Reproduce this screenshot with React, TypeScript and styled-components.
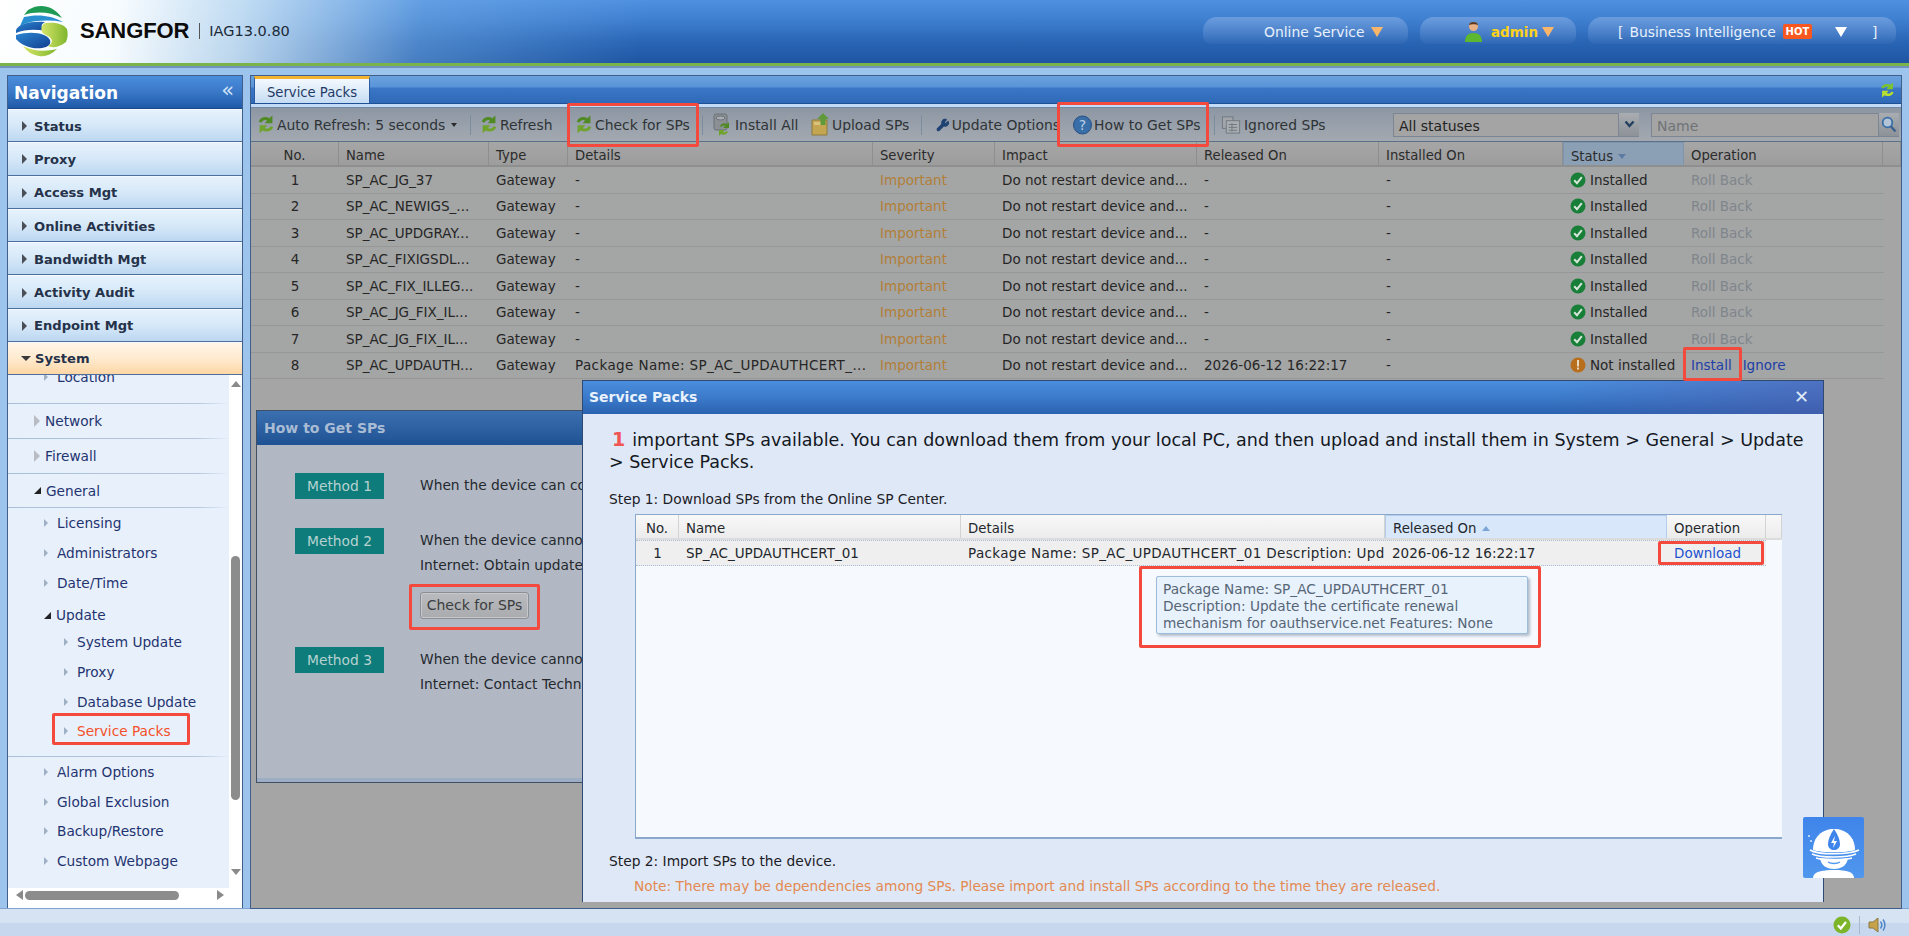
import React from "react";
import styled, { createGlobalStyle } from "styled-components";
import { Wrench } from "lucide-react";

const GlobalStyle = createGlobalStyle`
  html, body {
    margin: 0;
    padding: 0;
    background: #9cc4ec;
    font-family: "DejaVu Sans", Verdana, sans-serif;
    font-size: 13px;
  }
  * { box-sizing: border-box; }
`;

const Page = styled.div`
  position: relative;
  width: 1909px;
  height: 936px;
  display: flex;
  flex-direction: column;
  overflow: hidden;
  background: #9cc4ec;
`;

/* ---------- header ---------- */

const Header = styled.header`
  flex: none;
  height: 68px;
  display: flex;
  align-items: center;
  padding: 0 13px 5px 15px;
  border-bottom: 2px solid #6f93bd;
  box-shadow: inset 0 -3px 0 #79b34a;
  background:
    linear-gradient(100deg, #ffffff 0, #f6fbfe 120px, rgba(205, 228, 245, 0.9) 240px, rgba(120, 175, 230, 0.45) 420px, rgba(70, 135, 220, 0) 640px),
    linear-gradient(180deg, #4f90e0 0, #3f7fd0 30%, #2a66b6 62%, #1c539f 100%);
`;

const LogoText = styled.span`
  margin-left: 11px;
  font-family: "Liberation Sans", Arial, sans-serif;
  font-size: 22px;
  font-weight: 700;
  color: #0c0c0c;
  letter-spacing: -0.1px;
`;

const LogoDivider = styled.span`
  width: 1px;
  height: 16px;
  margin: 0 9px 0 10px;
  background: #555;
`;

const Version = styled.span`
  font-size: 14.5px;
  color: #1d2a38;
`;

const HeaderRight = styled.div`
  margin-left: auto;
  display: flex;
  align-items: center;
  gap: 12px;
`;

const Pill = styled.div<{ $w: number; $pad: number }>`
  width: ${(p) => p.$w}px;
  height: 27px;
  padding: 2px 0 0 ${(p) => p.$pad}px;
  display: flex;
  align-items: center;
  border-radius: 14px 14px 8px 8px;
  background: linear-gradient(180deg, rgba(120, 165, 225, 0.75), rgba(60, 110, 185, 0.35));
  color: #e8f1fb;
  font-size: 13.9px;
  white-space: nowrap;
`;

const AdminName = styled.span`
  color: #ffd21a;
  font-weight: 700;
  font-size: 13.5px;
  margin: 0 4px 0 9px;
`;

const Tri = styled.span<{ $c: string; $ml?: number }>`
  flex: none;
  width: 0;
  height: 0;
  margin-left: ${(p) => p.$ml ?? 0}px;
  border-left: 6px solid transparent;
  border-right: 6px solid transparent;
  border-top: 10px solid ${(p) => p.$c};
`;

const Bracket = styled.span<{ $ml?: number; $mr?: number }>`
  margin-left: ${(p) => p.$ml ?? 0}px;
  margin-right: ${(p) => p.$mr ?? 0}px;
`;

const Hot = styled.span`
  width: 29px;
  height: 15px;
  margin: 0 23px 0 7px;
  background: #f8581f;
  border-radius: 2px;
  color: #fff;
  font-size: 10px;
  font-weight: 700;
  line-height: 15px;
  text-align: center;
`;

/* ---------- body layout ---------- */

const Body = styled.div`
  flex: none;
  height: 834px;
  margin-top: 7px;
  padding: 0 7px;
  display: flex;
  gap: 7px;
`;

const StatusBar = styled.footer`
  flex: none;
  height: 28px;
  margin-top: -1px;
  border-top: 1px solid #7ea3cf;
  background: linear-gradient(180deg, #d6e3f3 0, #d6e3f3 50%, #c7d8ee 50%, #c7d8ee 100%);
  display: flex;
  align-items: center;
  justify-content: flex-end;
  gap: 8px;
  padding: 4px 21px 0 0;
`;

const StatusDivider = styled.span`
  width: 1px;
  height: 18px;
  background: #aab9ca;
`;

/* ---------- sidebar ---------- */

const Sidebar = styled.aside`
  flex: none;
  width: 236px;
  display: flex;
  flex-direction: column;
  border: 1px solid #3f5f8a;
  background: #fff;
`;

const NavTitle = styled.div`
  flex: none;
  height: 33px;
  display: flex;
  align-items: center;
  justify-content: space-between;
  padding: 2px 8px 0 6px;
  background: linear-gradient(180deg, #4b8ddc 0, #3a78c8 50%, #1f5aa8 100%);
  border-bottom: 1px solid #1c4a86;
  color: #fff;
  font-size: 17px;
  font-weight: 700;
`;

const Collapse = styled.span`
  color: #cfe2f7;
  font-size: 21px;
  font-weight: 400;
  line-height: 18px;
  margin-top: -6px;
`;

const NavGroup = styled.div<{ $open?: boolean }>`
  flex: none;
  height: 33.3px;
  display: flex;
  align-items: center;
  padding: ${(p) => (p.$open ? 0 : 1)}px 0 0 14px;
  gap: 5px;
  border-bottom: 1px solid #4c6f9c;
  border-top: 1px solid #f3f9fe;
  background: ${(p) =>
    p.$open
      ? "linear-gradient(180deg, #fff5e8 0, #ffe9cc 55%, #fdd6a4 100%)"
      : "linear-gradient(180deg, #e6f2fc 0, #d6e8f8 50%, #bcd7f1 100%)"};
  color: #25324a;
  font-size: 13.1px;
  font-weight: 700;
`;

const GroupArrow = styled.span<{ $open?: boolean }>`
  flex: none;
  width: 0;
  height: 0;
  ${(p) =>
    p.$open
      ? `border-left: 5px solid transparent; border-right: 5px solid transparent; border-top: 5px solid #3a3a3a; margin-left: -1px; margin-right: -1px;`
      : `border-top: 5px solid transparent; border-bottom: 5px solid transparent; border-left: 5px solid #4a4f57; margin-right: 2px;`}
`;

const SubArea = styled.div`
  flex: 1;
  min-height: 0;
  display: flex;
  overflow: hidden;
`;

const SubScroll = styled.div`
  flex: 1;
  overflow: hidden;
  background: #e8f0fb;
`;

const SubInner = styled.div`
  margin-top: -14px;
`;

const Section = styled.div<{ $pad?: number }>`
  padding-bottom: ${(p) => p.$pad ?? 0}px;
  border-bottom: 1px solid transparent;
  border-image: linear-gradient(90deg, #a9bfdb 0, #b4c6de 85%, rgba(180, 198, 222, 0) 100%) 1;
`;

const TopRow = styled.div<{ $h: number }>`
  height: ${(p) => p.$h}px;
  display: flex;
  align-items: center;
  padding-left: 26px;
  gap: 5px;
  color: #1f3470;
  font-size: 13.7px;
`;

const LeafRow = styled.div<{ $level: 1 | 2; $h?: number; $mt?: number; $active?: boolean }>`
  height: ${(p) => p.$h ?? 29.7}px;
  margin-top: ${(p) => p.$mt ?? 0}px;
  display: flex;
  align-items: center;
  padding-left: ${(p) => (p.$level === 1 ? 36 : 56)}px;
  gap: 5px;
  color: ${(p) => (p.$active ? "#f4502a" : "#1f3470")};
  font-size: 13.7px;
`;

const ClosedArrow = styled.span`
  flex: none;
  width: 0;
  height: 0;
  border-top: 6px solid transparent;
  border-bottom: 6px solid transparent;
  border-left: 6px solid #b9bcc2;
`;

const OpenArrow = styled.span`
  flex: none;
  width: 0;
  height: 0;
  border-top: 7px solid transparent;
  border-right: 7px solid #222;
`;

const LeafArrow = styled.span`
  flex: none;
  width: 0;
  height: 0;
  margin-right: 4px;
  border-top: 4px solid transparent;
  border-bottom: 4px solid transparent;
  border-left: 4px solid #9fb0c4;
`;

const VScroll = styled.div`
  flex: none;
  width: 13px;
  display: flex;
  flex-direction: column;
  align-items: center;
  background: #fff;
`;

const ScrollUp = styled.span`
  margin-top: 6px;
  border-left: 5px solid transparent;
  border-right: 5px solid transparent;
  border-bottom: 6px solid #8a8a8a;
`;

const ScrollDown = styled.span`
  margin-top: 69px;
  border-left: 5px solid transparent;
  border-right: 5px solid transparent;
  border-top: 6px solid #8a8a8a;
`;

const VThumb = styled.span`
  width: 9px;
  height: 244px;
  margin-top: 169px;
  border-radius: 5px;
  background: #8c8c8c;
`;

const HScroll = styled.div`
  flex: none;
  height: 20px;
  display: flex;
  align-items: center;
  padding: 0 0 6px 8px;
  background: #fff;
`;

const ScrollLeft = styled.span`
  border-top: 5px solid transparent;
  border-bottom: 5px solid transparent;
  border-right: 7px solid #8a8a8a;
`;

const ScrollRight = styled.span`
  margin-left: 38px;
  border-top: 5px solid transparent;
  border-bottom: 5px solid transparent;
  border-left: 7px solid #8a8a8a;
`;

const HThumb = styled.span`
  width: 154px;
  height: 9px;
  margin-left: 2px;
  border-radius: 5px;
  background: #8c8c8c;
`;

/* ---------- main panel ---------- */

const Main = styled.main`
  position: relative;
  flex: 1;
  min-width: 0;
  display: flex;
  flex-direction: column;
  border: 1px solid #3f5f8a;
  background: #a5a5a5;
`;

const TabBar = styled.div`
  flex: none;
  height: 28px;
  display: flex;
  align-items: flex-end;
  justify-content: space-between;
  padding: 0 6px 0 3px;
  background: linear-gradient(180deg, #6aa2df 0, #5a94d8 40%, #3a76c6 45%, #2f6ab8 100%);
  border-bottom: 1px solid #1f5096;
`;

const Tab = styled.div`
  width: 116px;
  height: 27px;
  display: flex;
  align-items: center;
  justify-content: center;
  padding-top: 2px;
  border: 1px solid #2a5c9f;
  border-top: 3px solid #f2b431;
  border-bottom: none;
  background: linear-gradient(180deg, #f4f9fe, #c5dcf4);
  color: #1f3a66;
  font-size: 13.2px;
`;

const TabRefresh = styled.span`
  align-self: center;
  display: flex;
`;

const TabStrip = styled.div`
  flex: none;
  height: 4px;
  background: #c3dbf5;
  border-bottom: 1px solid #728aa5;
`;

const Toolbar = styled.div`
  flex: none;
  height: 34px;
  display: flex;
  align-items: center;
  padding-left: 6px;
  background: linear-gradient(180deg, #8d97a3 0, #9aa2ac 60%, #a4a9af 100%);
  border-bottom: 1px solid #5b7189;
  color: #2f3336;
`;

const ToolItem = styled.div<{ $w: number; $ml?: number }>`
  flex: none;
  width: ${(p) => p.$w}px;
  height: 24px;
  margin-left: ${(p) => p.$ml ?? 0}px;
  display: flex;
  align-items: center;
  gap: 2px;
  overflow: hidden;
  white-space: nowrap;
  font-size: 13.9px;
`;

const Caret = styled.span`
  margin-left: 4px;
  border-left: 3px solid transparent;
  border-right: 3px solid transparent;
  border-top: 4px solid #2a2a2a;
`;

const ToolSep = styled.span<{ $ml: number }>`
  flex: none;
  width: 1px;
  height: 20px;
  margin-left: ${(p) => p.$ml}px;
  background: #7d8c9c;
`;

const Field = styled.div<{ $w: number; $ml: number; $muted?: boolean }>`
  flex: none;
  width: ${(p) => p.$w}px;
  height: 24px;
  margin-left: ${(p) => p.$ml}px;
  display: flex;
  align-items: center;
  padding: 2px 0 0 5px;
  background: #a4a4a4;
  border: 1px solid #7c8591;
  color: ${(p) => (p.$muted ? "#6f7378" : "#222")};
  font-size: 14px;
`;

const FieldBtn = styled.div`
  flex: none;
  width: 20px;
  height: 24px;
  display: flex;
  align-items: center;
  justify-content: center;
  background: linear-gradient(180deg, #a9adb2, #8d9298);
  border-bottom: 1px solid #7c8591;
`;

const GridHead = styled.div`
  flex: none;
  height: 25px;
  display: grid;
  grid-template-columns: 88px 150px 79px 305px 122px 202px 182px 184px 121px 199px 1fr;
  background: linear-gradient(180deg, #a6a6a6 0, #9d9d9d 100%);
  border-bottom: 2px solid #8f8f8f;
  color: #2b2b2b;
`;

const HeadCell = styled.div<{ $center?: boolean; $sorted?: boolean }>`
  display: flex;
  align-items: center;
  gap: 5px;
  padding: 4px 0 0 ${(p) => (p.$center ? 0 : 7)}px;
  justify-content: ${(p) => (p.$center ? "center" : "flex-start")};
  border-right: 1px solid #8e8e8e;
  font-size: 13.2px;
  ${(p) => p.$sorted && "background: #8b9fb5; border: 1px solid #7f94ad; border-bottom: none;"}
`;

const SortDown = styled.span`
  border-left: 4px solid transparent;
  border-right: 4px solid transparent;
  border-top: 5px solid #5b7ba3;
`;

const GridRow = styled.div`
  flex: none;
  height: 26.5px;
  display: grid;
  grid-template-columns: 88px 150px 79px 305px 122px 202px 182px 184px 121px 199px;
  width: 1633px;
  border-bottom: 1px solid #979797;
  background: #a4a5a5;
  color: #262626;
`;

const Cell = styled.div<{ $center?: boolean; $color?: string; $track?: number }>`
  display: flex;
  align-items: center;
  gap: 4px;
  padding-left: ${(p) => (p.$center ? 0 : 7)}px;
  justify-content: ${(p) => (p.$center ? "center" : "flex-start")};
  color: ${(p) => p.$color ?? "inherit"};
  font-size: 13.5px;
  letter-spacing: ${(p) => p.$track ?? 0}px;
  white-space: nowrap;
  overflow: hidden;
`;

const LinkText = styled.span<{ $ml?: number }>`
  color: #1d3fa8;
  margin-left: ${(p) => p.$ml ?? 0}px;
`;

/* ---------- windows ---------- */

const HelpWindow = styled.section`
  position: absolute;
  left: 5px;
  top: 334px;
  width: 940px;
  height: 373px;
  display: flex;
  flex-direction: column;
  border: 1px solid #3f5064;
  background: #b1b8c4;
`;

const HelpTitle = styled.div`
  flex: none;
  height: 34px;
  display: flex;
  align-items: center;
  padding-left: 7px;
  background: linear-gradient(180deg, #3b70b0, #1f5292);
  color: #a9bcd4;
  font-size: 14px;
  font-weight: 700;
`;

const HelpBody = styled.div`
  flex: 1;
  padding: 28px 0 0 38px;
  border-bottom: 4px solid #9dadc4;
`;

const Method = styled.div<{ $mb: number }>`
  display: flex;
  align-items: flex-start;
  margin-bottom: ${(p) => p.$mb}px;
`;

const MethodTag = styled.div`
  flex: none;
  width: 89px;
  height: 26px;
  margin-right: 36px;
  display: flex;
  align-items: center;
  justify-content: center;
  background: #0e7c7b;
  color: #b7d2d0;
  font-size: 13.8px;
`;

const MethodText = styled.div`
  color: #25292e;
  font-size: 13.8px;
  line-height: 24.5px;
  white-space: nowrap;
`;

const GrayButton = styled.div`
  width: 109px;
  height: 27px;
  margin-top: 15px;
  display: flex;
  align-items: center;
  justify-content: center;
  border: 1px solid #8c8f94;
  border-radius: 3px;
  background: linear-gradient(180deg, #b9bbbe, #a9abae);
  box-shadow: inset 0 0 0 1px #c6c8cb;
  color: #3b3d40;
  font-size: 14px;
`;

const Modal = styled.section`
  position: absolute;
  left: 331px;
  top: 304px;
  width: 1242px;
  height: 522px;
  display: flex;
  flex-direction: column;
  border: 1px solid #2f4a72;
  border-bottom: none;
  background: #dfe8f6;
  overflow: hidden;
`;

const ModalTitle = styled.div`
  flex: none;
  height: 33px;
  display: flex;
  align-items: center;
  justify-content: space-between;
  padding: 0 14px 2px 6px;
  background:
    linear-gradient(100deg, rgba(80, 90, 170, 0) 78%, rgba(80, 90, 170, 0.55) 100%),
    linear-gradient(180deg, #4b8edd 0, #3a78c8 55%, #2a62b0 100%);
  color: #e9f2fc;
  font-size: 14px;
  font-weight: 700;
`;

const CloseX = styled.span`
  color: #dfe9f6;
  font-size: 18px;
  font-weight: 700;
  line-height: 18px;
`;

const ModalBody = styled.div`
  flex: 1;
  padding: 14px 0 0 26px;
`;

const BigText = styled.p`
  width: 1200px;
  margin: 0;
  color: #14181f;
  font-size: 17.5px;
  line-height: 22px;
`;

const BigCount = styled.b`
  margin: 0 7px 0 3px;
  color: #f05656;
  font-size: 19px;
`;

const StepText = styled.div<{ $mt: number }>`
  margin-top: ${(p) => p.$mt}px;
  color: #1c2026;
  font-size: 13.8px;
  line-height: 16px;
`;

const NoteText = styled.div`
  margin: 9px 0 0 25px;
  color: #e38a52;
  font-size: 13.75px;
  line-height: 16px;
`;

const SpGrid = styled.div`
  width: 1147px;
  height: 325px;
  margin: 7px 0 0 26px;
  border: 1px solid #8aa8cc;
  border-bottom: 2px solid #8aa8cc;
  border-right: none;
  background: #f6fafe;
`;

const SpHead = styled.div`
  height: 25px;
  display: grid;
  grid-template-columns: 43px 282px 424px 282px 99px 1fr;
  background: linear-gradient(180deg, #f8f8f8, #ececec);
  border-bottom: 2px solid #dcdcdc;
  color: #23272c;
`;

const SpHeadCell = styled.div<{ $center?: boolean; $sorted?: boolean }>`
  display: flex;
  align-items: center;
  gap: 5px;
  padding: 3px 0 0 ${(p) => (p.$center ? 0 : 7)}px;
  justify-content: ${(p) => (p.$center ? "center" : "flex-start")};
  border-right: 1px solid #d3d3d3;
  font-size: 13.3px;
  ${(p) => p.$sorted && "background: #d8e7f9; border: 1px solid #b3cdea; border-bottom: none;"}
`;

const SortUp = styled.span`
  border-left: 4px solid transparent;
  border-right: 4px solid transparent;
  border-bottom: 5px solid #7ba6d8;
`;

const SpRow = styled.div`
  width: 1130px;
  height: 26px;
  display: grid;
  grid-template-columns: 43px 282px 424px 282px 99px;
  background: #efefef;
  border-top: 1px dotted #a9bdd4;
  border-bottom: 1px dotted #a9bdd4;
  color: #23272c;
`;

const SpCell = styled.div<{ $center?: boolean; $track?: number }>`
  display: flex;
  align-items: center;
  padding: 0 0 1px ${(p) => (p.$center ? 0 : 7)}px;
  justify-content: ${(p) => (p.$center ? "center" : "flex-start")};
  font-size: 13.5px;
  letter-spacing: ${(p) => p.$track ?? 0}px;
  white-space: nowrap;
  overflow: hidden;
`;

const DownloadLink = styled.span`
  color: #1e52cf;
`;

const Tooltip = styled.div`
  position: absolute;
  left: 1156px;
  top: 576px;
  width: 372px;
  height: 58px;
  padding: 4px 6px;
  background: #e8f2fd;
  border: 1px solid #9dbcdb;
  border-radius: 2px;
  box-shadow: 2px 2px 3px rgba(90, 110, 140, 0.45);
  color: #566575;
  font-size: 13.7px;
  line-height: 17px;
  white-space: nowrap;
`;

const Mascot = styled.div`
  position: absolute;
  left: 1803px;
  top: 817px;
  width: 61px;
  height: 61px;
  border-radius: 2px;
  overflow: hidden;
  background: linear-gradient(180deg, #3f84ea, #5097ee);
`;

/* Red call-out frames drawn over the screen */
const Callout = styled.div<{ $x: number; $y: number; $w: number; $h: number }>`
  position: absolute;
  left: ${(p) => p.$x}px;
  top: ${(p) => p.$y}px;
  width: ${(p) => p.$w}px;
  height: ${(p) => p.$h}px;
  border: 3px solid #f34a3d;
  border-radius: 2px;
`;

/* ---------- drawings ---------- */

function SyncIcon({ size = 18 }: { size?: number }) {
  return (
    <svg width={size} height={size * 1.15} viewBox="0 0 18 21" style={{ flex: "none" }}>
      <path d="M15.5 1.5v8h-8l2.6-2.7C8.3 5.6 5.6 6.2 4.3 8.8L1.6 7.6C3.5 3.4 8.4 2 12.4 4.2z" fill="#4f8a23" />
      <path d="M2.5 19.5v-8h8l-2.6 2.7c1.8 1.2 4.5.6 5.8-2l2.7 1.200c-1.900 4.200-6.800 5.600-10.800 3.400z" fill="#6fa32e" />
    </svg>
  );
}

function InstallIcon() {
  return (
    <svg width="20" height="24" viewBox="0 0 20 24" style={{ flex: "none" }}>
      <rect x="1" y="1" width="13" height="16" rx="2" fill="#8b9094" stroke="#6b7075" />
      <ellipse cx="7.500" cy="5" rx="4.500" ry="2" fill="#a7adb2" stroke="#6b7075" />
      <path d="M16 9v6h-6l2-2c-1-.8-2.600-.5-3.400 1L7 13.200c1.300-2.800 4.400-3.600 7-2.200z" fill="#4f8a23" />
      <path d="M6 23v-6h6l-2 2c1 .8 2.600.5 3.400-1l1.600.8c-1.300 2.800-4.400 3.600-7 2.200z" fill="#6fa32e" />
    </svg>
  );
}

function UploadIcon() {
  return (
    <svg width="19" height="24" viewBox="0 0 19 24" style={{ flex: "none" }}>
      <path d="M1 7h15v15H1z" fill="#c3a552" stroke="#8e7a3c" />
      <path d="M3 9h11v3H3z" fill="#d8c27c" />
      <path d="M12 0l6 6h-3.500v6h-5V6H6z" fill="#5e9a3a" />
    </svg>
  );
}

function HelpIcon() {
  return (
    <svg width="19" height="20" viewBox="0 0 19 20" style={{ flex: "none" }}>
      <circle cx="9.500" cy="10" r="9" fill="#3a6ea8" stroke="#264f80" />
      <text x="9.500" y="15" textAnchor="middle" fontSize="14" fill="#b9cfe6" fontFamily="DejaVu Sans">?</text>
    </svg>
  );
}

function IgnoredIcon() {
  return (
    <svg width="21" height="20" viewBox="0 0 22 20" style={{ flex: "none" }} fill="none" stroke="#6f7880">
      <rect x="1.500" y="1.500" width="11" height="12" fill="#a3a7ab" />
      <rect x="5.500" y="5.500" width="14" height="13" fill="#a9adb1" />
      <path d="M8 9.500h9M8 12.500h9M8 15.500h9M11.500 8v9" />
    </svg>
  );
}

function CheckDot() {
  return (
    <svg width="16" height="16" viewBox="0 0 16 16" style={{ flex: "none" }}>
      <circle cx="8" cy="8" r="7.500" fill="#177f38" />
      <path d="M4.200 8.200l2.800 3 4.800-6" fill="none" stroke="#d7e6da" strokeWidth="2" />
    </svg>
  );
}

function WarnDot() {
  return (
    <svg width="16" height="16" viewBox="0 0 16 16" style={{ flex: "none" }}>
      <circle cx="8" cy="8" r="7.500" fill="#b76f1c" />
      <rect x="7" y="3" width="2" height="6.500" fill="#e8d9c2" />
      <rect x="7" y="10.500" width="2" height="2" fill="#e8d9c2" />
    </svg>
  );
}

function SearchIcon() {
  return (
    <svg width="16" height="17" viewBox="0 0 16 17" fill="none">
      <circle cx="6.500" cy="6.500" r="4.800" stroke="#3a6ea8" strokeWidth="1.800" fill="#b3c4d6" />
      <path d="M10 10.500l4.500 5" stroke="#3a5f8c" strokeWidth="2.400" />
    </svg>
  );
}

function ChevronDown() {
  return (
    <svg width="11" height="8" viewBox="0 0 11 8" fill="none">
      <path d="M1.500 1.500l4 4.500 4-4.500" stroke="#23405f" strokeWidth="2.400" />
    </svg>
  );
}

function LogoGlobe() {
  return (
    <svg width="54" height="53" viewBox="0 0 54 53" style={{ flex: "none" }}>
      <defs>
        <linearGradient id="globe-blue" x1="0" y1="0" x2="1" y2="1">
          <stop offset="0" stopColor="#2a86d2" />
          <stop offset="1" stopColor="#123f90" />
        </linearGradient>
        <linearGradient id="globe-lime" x1="0" y1="0" x2="1" y2="0">
          <stop offset="0" stopColor="#d6e56a" />
          <stop offset="1" stopColor="#7fb62c" />
        </linearGradient>
      </defs>
      {/* top cap */}
      <path d="M13 6C22 0 37-1 47 14 35 8 22 7 9 11z" fill="#1f9a54" />
      <path d="M9 13c13-3 27-2 39 5-12-2-24-2-36 1-3 1-5 2-7 3z" fill="#2a8fd0" />
      {/* left blue lens */}
      <path d="M1 26C4 20 14 17 30 18c-6 3-3 7 1 9-10-2-21-2-30 2z" fill="url(#globe-blue)" />
      {/* right lime bulge */}
      <path d="M30 19c8-1 18 0 22 6 1 5 1 8-1 13-8 6-14 6-18 4 6-3 5-8-2-11-6-2-6-9-1-12z" fill="url(#globe-lime)" />
      {/* lower blue lens */}
      <path d="M1 31c10-3 21-3 28 0 7 3 9 9 2 12-9 3-22 1-30-8z" fill="url(#globe-blue)" />
      {/* bottom lime crescent */}
      <path d="M8 42c9 5 22 6 34 3-6 6-12 8-18 7-6-1-12-4-16-10z" fill="url(#globe-lime)" />
    </svg>
  );
}

function PersonIcon() {
  return (
    <svg width="17" height="22" viewBox="0 0 17 22" style={{ flex: "none" }}>
      <circle cx="8.500" cy="5.500" r="4.500" fill="#e8b083" />
      <path d="M4 4c0-4 9-4 9 0-2-1-7-1-9 0z" fill="#5a3a26" />
      <path d="M0 21c0-6 3-9 8.500-9S17 15 17 21z" fill="#5cb82e" />
    </svg>
  );
}

function SpeakerIcon() {
  return (
    <svg width="20" height="18" viewBox="0 0 20 18" fill="none">
      <path d="M1 6h4l5-4v14l-5-4H1z" fill="#c7a24a" stroke="#8b7a45" />
      <path d="M12.500 5.500c1.500 2 1.500 5 0 7M15 3.500c2.500 3 2.500 8 0 11" stroke="#4d86c6" strokeWidth="1.500" />
    </svg>
  );
}

function GreenOk() {
  return (
    <svg width="18" height="18" viewBox="0 0 18 18">
      <circle cx="9" cy="9" r="8.500" fill="#7db52a" />
      <path d="M4.800 9.200l3 3.300 5.200-6.500" fill="none" stroke="#fff" strokeWidth="2.200" />
    </svg>
  );
}

function MascotFigure() {
  return (
    <svg width="61" height="61" viewBox="0 0 61 61">
      {/* spark */}
      <circle cx="6" cy="19" r="1" fill="#dcebff" />
      <circle cx="8" cy="24" r="1" fill="#dcebff" />
      {/* helmet */}
      <path d="M10 33C10 20 19 12 31 12s21 8 21 21c-8 3-34 3-42 0z" fill="#fff" />
      {/* drop with bolt */}
      <path d="M31 12c-4 6-6 11-6 15 0 4 3 6 6 6s6-2 6-6c0-4-2-9-6-15z" fill="#3f84ea" />
      <path d="M32 19l-4 7h3l-1 5 4-7h-3z" fill="#fff" />
      {/* visor rings */}
      <path d="M7 33c8 5 39 5 49 0" fill="none" stroke="#fff" strokeWidth="1.600" />
      <path d="M9 37c8 4 35 4 44 0" fill="none" stroke="#fff" strokeWidth="1.600" />
      <path d="M13 41c6 2 29 2 36 0" fill="none" stroke="#fff" strokeWidth="1.400" />
      {/* face */}
      <path d="M17 41c8 2 22 2 28 0-1 7-6 11-14 11S18 48 17 41z" fill="#fff" />
      <path d="M25 45c3 2 9 2 12 0" fill="none" stroke="#5097ee" strokeWidth="1.400" />
      {/* shoulders */}
      <path d="M10 61c0-6 8-8 21-8s20 2 20 8z" fill="#fff" />
    </svg>
  );
}

/* ---------- data ---------- */

const columns = ["Name", "Type", "Details", "Severity", "Impact", "Released On", "Installed On"];

const packs = [
  "SP_AC_JG_37",
  "SP_AC_NEWIGS_...",
  "SP_AC_UPDGRAY...",
  "SP_AC_FIXIGSDL...",
  "SP_AC_FIX_ILLEG...",
  "SP_AC_JG_FIX_IL...",
  "SP_AC_JG_FIX_IL...",
  "SP_AC_UPDAUTH...",
];

const groups = ["Status", "Proxy", "Access Mgt", "Online Activities", "Bandwidth Mgt", "Activity Audit", "Endpoint Mgt"];

export default function App(): JSX.Element {
  return (
    <Page>
      <GlobalStyle />
      <Header>
        <LogoGlobe />
        <LogoText>SANGFOR</LogoText>
        <LogoDivider />
        <Version>IAG13.0.80</Version>
        <HeaderRight>
          <Pill $w={205} $pad={61}>
            Online Service
            <Tri $c="#f9b66a" $ml={6} />
          </Pill>
          <Pill $w={156} $pad={45}>
            <PersonIcon />
            <AdminName>admin</AdminName>
            <Tri $c="#f9b66a" />
          </Pill>
          <Pill $w={308} $pad={30}>
            <Bracket $mr={6}>[</Bracket>
            Business Intelligence
            <Hot>HOT</Hot>
            <Tri $c="#ffffff" />
            <Bracket $ml={25}>]</Bracket>
          </Pill>
        </HeaderRight>
      </Header>

      <Body>
        <Sidebar>
          <NavTitle>
            Navigation
            <Collapse>«</Collapse>
          </NavTitle>
          {groups.map((g) => (
            <NavGroup key={g}>
              <GroupArrow />
              {g}
            </NavGroup>
          ))}
          <NavGroup $open>
            <GroupArrow $open />
            System
          </NavGroup>
          <SubArea>
            <SubScroll>
              <SubInner>
                <Section $pad={11}>
                  <LeafRow $level={1} $h={31}>
                    <LeafArrow />
                    Location
                  </LeafRow>
                </Section>
                <Section>
                  <TopRow $h={34}>
                    <ClosedArrow />
                    Network
                  </TopRow>
                </Section>
                <Section>
                  <TopRow $h={34}>
                    <ClosedArrow />
                    Firewall
                  </TopRow>
                </Section>
                <Section>
                  <TopRow $h={33}>
                    <OpenArrow />
                    General
                  </TopRow>
                </Section>
                <Section $pad={10}>
                  <LeafRow $level={1}>
                    <LeafArrow />
                    Licensing
                  </LeafRow>
                  <LeafRow $level={1}>
                    <LeafArrow />
                    Administrators
                  </LeafRow>
                  <LeafRow $level={1}>
                    <LeafArrow />
                    Date/Time
                  </LeafRow>
                  <LeafRow $level={1} $h={24} $mt={6}>
                    <OpenArrow />
                    Update
                  </LeafRow>
                  <LeafRow $level={2}>
                    <LeafArrow />
                    System Update
                  </LeafRow>
                  <LeafRow $level={2}>
                    <LeafArrow />
                    Proxy
                  </LeafRow>
                  <LeafRow $level={2}>
                    <LeafArrow />
                    Database Update
                  </LeafRow>
                  <LeafRow $level={2} $active>
                    <LeafArrow />
                    Service Packs
                  </LeafRow>
                </Section>
                <LeafRow $level={1}>
                  <LeafArrow />
                  Alarm Options
                </LeafRow>
                <LeafRow $level={1}>
                  <LeafArrow />
                  Global Exclusion
                </LeafRow>
                <LeafRow $level={1}>
                  <LeafArrow />
                  Backup/Restore
                </LeafRow>
                <LeafRow $level={1}>
                  <LeafArrow />
                  Custom Webpage
                </LeafRow>
              </SubInner>
            </SubScroll>
            <VScroll>
              <ScrollUp />
              <VThumb />
              <ScrollDown />
            </VScroll>
          </SubArea>
          <HScroll>
            <ScrollLeft />
            <HThumb />
            <ScrollRight />
          </HScroll>
        </Sidebar>

        <Main>
          <TabBar>
            <Tab>Service Packs</Tab>
            <TabRefresh>
              <svg width="15" height="18" viewBox="0 0 18 21">
                <path d="M15.500 1.500v8h-8l2.600-2.700C8.300 5.600 5.600 6.200 4.300 8.800L1.600 7.600C3.500 3.400 8.400 2 12.400 4.200z" fill="#7bc52a" />
                <path d="M2.500 19.500v-8h8l-2.600 2.700c1.800 1.200 4.500.6 5.800-2l2.700 1.200c-1.900 4.200-6.800 5.600-10.800 3.400z" fill="#b8de2f" />
              </svg>
            </TabRefresh>
          </TabBar>
          <TabStrip />
          <Toolbar>
            <ToolItem $w={212}>
              <SyncIcon />
              Auto Refresh: 5 seconds
              <Caret />
            </ToolItem>
            <ToolSep $ml={1} />
            <ToolItem $w={82} $ml={9}>
              <SyncIcon />
              Refresh
            </ToolItem>
            <ToolItem $w={125} $ml={13}>
              <SyncIcon />
              Check for SPs
            </ToolItem>
            <ToolSep $ml={2} />
            <ToolItem $w={92} $ml={10}>
              <InstallIcon />
              Install All
            </ToolItem>
            <ToolItem $w={104} $ml={6}>
              <UploadIcon />
              Upload SPs
            </ToolItem>
            <ToolSep $ml={6} />
            <ToolItem $w={124} $ml={14}>
              <Wrench size={16} fill="#1f4272" color="#1f4272" />
              Update Options
            </ToolItem>
            <ToolItem $w={134} $ml={13}>
              <HelpIcon />
              How to Get SPs
            </ToolItem>
            <ToolSep $ml={7} />
            <ToolItem $w={110} $ml={6}>
              <IgnoredIcon />
              Ignored SPs
            </ToolItem>
            <Field $w={226} $ml={62}>All statuses</Field>
            <FieldBtn>
              <ChevronDown />
            </FieldBtn>
            <Field $w={228} $ml={12} $muted>Name</Field>
            <FieldBtn>
              <SearchIcon />
            </FieldBtn>
          </Toolbar>
          <GridHead>
            <HeadCell $center>No.</HeadCell>
            {columns.map((c) => (
              <HeadCell key={c}>{c}</HeadCell>
            ))}
            <HeadCell $sorted>
              Status
              <SortDown />
            </HeadCell>
            <HeadCell>Operation</HeadCell>
            <HeadCell />
          </GridHead>
          {packs.map((name, i) => {
            const pending = i === packs.length - 1;
            return (
              <GridRow key={i}>
                <Cell $center>{i + 1}</Cell>
                <Cell>{name}</Cell>
                <Cell>Gateway</Cell>
                <Cell $track={pending ? 0.4 : 0}>{pending ? "Package Name: SP_AC_UPDAUTHCERT_..." : "-"}</Cell>
                <Cell $color="#b27f38">Important</Cell>
                <Cell>Do not restart device and...</Cell>
                <Cell>{pending ? "2026-06-12 16:22:17" : "-"}</Cell>
                <Cell>-</Cell>
                <Cell>
                  {pending ? <WarnDot /> : <CheckDot />}
                  {pending ? "Not installed" : "Installed"}
                </Cell>
                <Cell $color="#7f868c">
                  {pending ? (
                    <>
                      <LinkText>Install</LinkText>
                      <LinkText $ml={7}>Ignore</LinkText>
                    </>
                  ) : (
                    "Roll Back"
                  )}
                </Cell>
              </GridRow>
            );
          })}

          <HelpWindow>
            <HelpTitle>How to Get SPs</HelpTitle>
            <HelpBody>
              <Method $mb={29}>
                <MethodTag>Method 1</MethodTag>
                <MethodText>When the device can connect to the Internet: Click Check for SPs.</MethodText>
              </Method>
              <Method $mb={28}>
                <MethodTag>Method 2</MethodTag>
                <MethodText>
                  When the device cannot connect to the SP center but your PC can access the
                  <br />
                  Internet: Obtain update packages from the online center.
                  <GrayButton>Check for SPs</GrayButton>
                </MethodText>
              </Method>
              <Method $mb={0}>
                <MethodTag>Method 3</MethodTag>
                <MethodText>
                  When the device cannot connect to the SP center and your PC cannot access the
                  <br />
                  Internet: Contact Technical Support.
                </MethodText>
              </Method>
            </HelpBody>
          </HelpWindow>

          <Modal>
            <ModalTitle>
              Service Packs
              <CloseX>✕</CloseX>
            </ModalTitle>
            <ModalBody>
              <BigText>
                <BigCount>1</BigCount>
                important SPs available. You can download them from your local PC, and then upload and install them in
                System &gt; General &gt; Update &gt; Service Packs.
              </BigText>
              <StepText $mt={18}>Step 1: Download SPs from the Online SP Center.</StepText>
              <SpGrid>
                <SpHead>
                  <SpHeadCell $center>No.</SpHeadCell>
                  <SpHeadCell>Name</SpHeadCell>
                  <SpHeadCell>Details</SpHeadCell>
                  <SpHeadCell $sorted>
                    Released On
                    <SortUp />
                  </SpHeadCell>
                  <SpHeadCell>Operation</SpHeadCell>
                  <SpHeadCell />
                </SpHead>
                <SpRow>
                  <SpCell $center>1</SpCell>
                  <SpCell>SP_AC_UPDAUTHCERT_01</SpCell>
                  <SpCell $track={0.35}>Package Name: SP_AC_UPDAUTHCERT_01 Description: Update the</SpCell>
                  <SpCell>2026-06-12 16:22:17</SpCell>
                  <SpCell>
                    <DownloadLink>Download</DownloadLink>
                  </SpCell>
                </SpRow>
              </SpGrid>
              <StepText $mt={14}>Step 2: Import SPs to the device.</StepText>
              <NoteText>Note: There may be dependencies among SPs. Please import and install SPs according to the time they are released.</NoteText>
            </ModalBody>
          </Modal>
        </Main>
      </Body>

      <StatusBar>
        <GreenOk />
        <StatusDivider />
        <SpeakerIcon />
      </StatusBar>

      <Tooltip>
        Package Name: SP_AC_UPDAUTHCERT_01
        <br />
        Description: Update the certificate renewal
        <br />
        mechanism for oauthservice.net Features: None
      </Tooltip>

      <Mascot>
        <MascotFigure />
      </Mascot>

      <Callout $x={567} $y={103} $w={132} $h={44} />
      <Callout $x={1057} $y={102} $w={152} $h={45} />
      <Callout $x={1683} $y={347} $w={59} $h={34} />
      <Callout $x={52} $y={713} $w={138} $h={32} />
      <Callout $x={409} $y={584} $w={131} $h={46} />
      <Callout $x={1658} $y={541} $w={106} $h={24} />
      <Callout $x={1139} $y={566} $w={402} $h={82} />
    </Page>
  );
}
